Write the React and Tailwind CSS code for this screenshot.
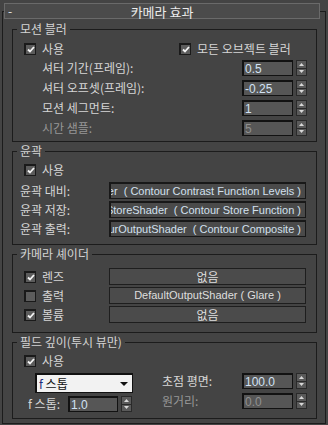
import React from "react";

const kr = "font-['Noto_Sans_CJK_KR','Noto_Sans',sans-serif]";
const lat = "font-['Liberation_Sans',Arial,sans-serif]";

// checkbox square
const Check = ({ on }) => (
  <span className="w-[12px] h-[12px] shrink-0 border border-[#1a1a1a] border-t-2 border-l-2 bg-[#5c5c5c] flex items-center justify-center">
    {on && (
      <svg width="8" height="7" viewBox="0 0 8 7">
        <path d="M1 3.5 L3 5.5 L7 1" stroke="#f4f4f4" strokeWidth="1.8" fill="none" />
      </svg>
    )}
  </span>
);

// up/down spinner
const Spinner = () => (
  <span className="ml-[3px] w-[11px] h-[16px] flex flex-col border border-[#2a2a2a] bg-[#5a5a5a]">
    <span className="flex-1 flex items-center justify-center border-b border-[#2a2a2a]">
      <svg width="5" height="3" viewBox="0 0 5 3">
        <path d="M0 3 L2.5 0 L5 3 Z" fill="#d8d8d8" />
      </svg>
    </span>
    <span className="flex-1 flex items-center justify-center">
      <svg width="5" height="3" viewBox="0 0 5 3">
        <path d="M0 0 L5 0 L2.5 3 Z" fill="#d8d8d8" />
      </svg>
    </span>
  </span>
);

const NumField = ({ value, dim, w = "w-[51px]" }) => (
  <div className="flex items-center">
    <div
      className={`${w} h-[16px] border border-[#121212] border-t-2 border-l-2 bg-[#565656] flex items-center pl-[1px] text-[12px] leading-none ${lat} ${
        dim ? "text-[#909090]" : "text-[#d2e2f4]"
      }`}
    >
      {value}
    </div>
    <Spinner />
  </div>
);

const Group = ({ title, className, children }) => (
  <fieldset className={`ml-[9px] w-[305px] border border-[#1c1c1c] ${className}`}>
    <legend className="ml-[4px] px-[3px] text-[12px] leading-[14px] text-[#d4d4d4]">{title}</legend>
    {children}
  </fieldset>
);

const App = () => {
  const blurRows = [
    { label: "셔터 기간(프레임):", value: "0.5" },
    { label: "셔터 오프셋(프레임):", value: "-0.25" },
    { label: "모션 세그먼트:", value: "1" },
    { label: "시간 샘플:", value: "5", dim: true },
  ];

  const contour = [
    { label: "윤곽 대비:", value: "DefaultContourContrastShader  ( Contour Contrast Function Levels )" },
    { label: "윤곽 저장:", value: "DefaultContourStoreShader  ( Contour Store Function )" },
    { label: "윤곽 출력:", value: "DefaultContourOutputShader  ( Contour Composite )" },
  ];

  const shaders = [
    { label: "렌즈", on: true, value: "없음" },
    { label: "출력", on: false, value: "DefaultOutputShader ( Glare )" },
    { label: "볼륨", on: true, value: "없음" },
  ];

  return (
    <div className={`w-[328px] h-[425px] bg-[#444444] overflow-hidden pt-[3px] ${kr} text-[12px] text-[#d6d6d6]`}>
      {/* rollout title */}
      <div className="relative z-10 ml-[4px] w-[316px] h-[16px] border border-[#6a6a6a] bg-[#4b4b4b] flex items-center leading-none text-[#ececec]">
        <span className="w-[16px] pl-[3px]">-</span>
        <span className="flex-1 text-center text-[13px]">카메라 효과</span>
        <span className="w-[16px]" />
      </div>

      <div className="-mt-[8px] ml-[2px] w-[324px] border border-[#1c1c1c] pt-[10px] pb-[4px]">
        {/* motion blur */}
        <Group title="모션 블러" className="pt-[5px] pb-[5px]">
          <div className="h-[16px] flex items-center pl-[11px] leading-none">
            <div className="w-[155px] flex items-center gap-[6px]">
              <Check on />
              <span>사용</span>
            </div>
            <div className="flex items-center gap-[6px]">
              <Check on />
              <span>모든 오브젝트 블러</span>
            </div>
          </div>
          <div className="mt-[3px] flex flex-col gap-[4px]">
            {blurRows.map((r) => (
              <div key={r.label} className="h-[16px] flex items-center pl-[29px] pr-[9px] leading-none">
                <span className={`flex-1 ${r.dim ? "text-[#969696]" : ""}`}>{r.label}</span>
                <NumField value={r.value} dim={r.dim} />
              </div>
            ))}
          </div>
        </Group>

        {/* contour */}
        <Group title="윤곽" className="mt-[2px] pt-[4px] pb-[7px]">
          <div className="h-[16px] flex items-center gap-[6px] pl-[11px] leading-none">
            <Check on />
            <span>사용</span>
          </div>
          <div className="mt-[4px] flex flex-col gap-[2px]">
            {contour.map((r) => (
              <div key={r.label} className="h-[17px] flex items-center pl-[7px] pr-[10px] leading-none">
                <span className="w-[89px] shrink-0">{r.label}</span>
                <div className="relative w-[197px] h-[17px] shrink-0 border border-[#181818] border-t-2 border-l-2 bg-[#4a4a4a] overflow-hidden">
                  <span className={`absolute right-[4px] top-0 h-full flex items-center whitespace-pre text-[11px] text-[#d2e0ee] ${lat}`}>
                    {r.value}
                  </span>
                </div>
              </div>
            ))}
          </div>
        </Group>

        {/* camera shaders */}
        <Group title="카메라 셰이더" className="mt-[2px] pt-[7px] pb-[9px]">
          <div className="flex flex-col gap-[2px]">
            {shaders.map((r) => (
              <div key={r.label} className="h-[17px] flex items-center pl-[11px] pr-[10px] leading-none">
                <div className="w-[85px] flex items-center gap-[6px]">
                  <Check on={r.on} />
                  <span>{r.label}</span>
                </div>
                <div
                  className={`w-[197px] h-[17px] border border-[#1e1e1e] bg-[#4b4b4b] flex items-center justify-center whitespace-pre text-[#dedede] ${
                    r.value === "없음" ? "text-[12px]" : `text-[11px] ${lat}`
                  }`}
                >
                  {r.value}
                </div>
              </div>
            ))}
          </div>
        </Group>

        {/* depth of field */}
        <Group title="필드 깊이(투시 뷰만)" className="mt-[2px] pt-[4px] pb-[6px]">
          <div className="h-[16px] flex items-center gap-[6px] pl-[11px] leading-none">
            <Check on />
            <span>사용</span>
          </div>
          <div className="mt-[4px] flex leading-none">
            <div className="w-[149px] flex flex-col">
              <div className="ml-[22px] w-[98px] h-[20px] border border-[#111] border-t-2 border-l-2 bg-[#f2f2f2] flex items-center pl-[2px] pr-[4px] text-[#111]">
                <span className="flex-1">
                  <span className="text-[#1c2a7a]">f</span> 스톱
                </span>
                <svg width="8" height="4" viewBox="0 0 8 4">
                  <path d="M0 0 L8 0 L4 4 Z" fill="#111" />
                </svg>
              </div>
              <div className="mt-[3px] h-[16px] flex items-center pl-[15px]">
                <span className="w-[40px]">f 스톱:</span>
                <NumField value="1.0" w="w-[50px]" />
              </div>
            </div>
            <div className="flex-1 flex flex-col gap-[4px] pr-[9px]">
              <div className="h-[16px] flex items-center">
                <span className="flex-1">초점 평면:</span>
                <NumField value="100.0" />
              </div>
              <div className="h-[16px] flex items-center">
                <span className="flex-1 text-[#969696]">원거리:</span>
                <NumField value="0.0" dim />
              </div>
            </div>
          </div>
        </Group>
      </div>
    </div>
  );
};

export default App;
